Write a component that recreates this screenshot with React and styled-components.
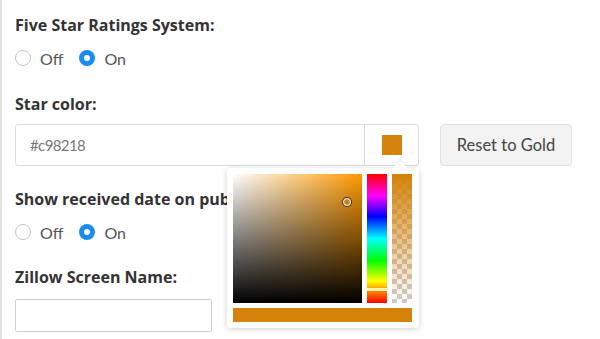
import React from 'react';
import styled, { createGlobalStyle } from 'styled-components';

const Global = createGlobalStyle`
  html, body { margin: 0; padding: 0; background: #fff; }
  body { font-family: Lato, "Liberation Sans", sans-serif; color: #333; }
`;

const Page = styled.div`
  width: 600px;
  height: 339px;
  box-sizing: border-box;
  border-left: 2px solid #e2e2e2;
  padding: 15px 0 0 13px;
  overflow: hidden;
`;

const Field = styled.div`
  margin-bottom: ${p => p.$gap || 24}px;
  position: relative;
`;

const Label = styled.div`
  font-family: "Open Sans", Lato, sans-serif;
  font-weight: 700;
  font-size: 16px;
  line-height: 20px;
  color: #333;
  margin-bottom: ${p => p.$mb || 10}px;
  white-space: nowrap;
`;

const RadioRow = styled.div`
  display: flex;
  align-items: center;
  height: 20px;
  padding-top: 3px;
`;

const Option = styled.label`
  display: flex;
  align-items: center;
  gap: 9px;
  margin-right: 16px;
  font-size: 16px;
  color: #555;
`;

const Dot = styled.span`
  width: 16px;
  height: 16px;
  border-radius: 50%;
  box-sizing: border-box;
  border: ${p => (p.$on ? '5px solid #1a8cf0' : '1.5px solid #c4c4c4')};
  background: #fff;
`;

const InputRow = styled.div`
  display: flex;
  align-items: stretch;
  height: 42px;
  position: relative;
`;

const InputGroup = styled.div`
  display: flex;
  width: 404px;
  border: 1px solid #dcdcdc;
  border-radius: 3px;
  box-sizing: border-box;
`;

const TextBox = styled.div`
  flex: 1;
  display: flex;
  align-items: center;
  padding-left: 14px;
  font-size: 15px;
  letter-spacing: -0.6px;
  color: #777;
`;

const Addon = styled.div`
  width: 53px;
  border-left: 1px solid #dcdcdc;
  display: flex;
  align-items: center;
  justify-content: center;
`;

const Swatch = styled.div`
  width: 20px;
  height: 20px;
  background: ${p => p.$color};
`;

const Button = styled.div`
  margin-left: 21px;
  width: 132px;
  box-sizing: border-box;
  border: 1px solid #e0e0e0;
  border-radius: 4px;
  background: #f3f3f3;
  display: flex;
  align-items: center;
  justify-content: center;
  font-size: 16.5px;
  color: #444;
`;

const Popup = styled.div`
  position: absolute;
  left: 212px;
  top: 44px;
  width: 192px;
  height: 160px;
  box-sizing: border-box;
  background: #fff;
  border-radius: 3px;
  box-shadow: 0 1px 6px rgba(0, 0, 0, 0.18);
  padding: 6px;
  display: grid;
  grid-template-columns: 129px 20px 20px;
  grid-template-rows: 129px 14px;
  column-gap: 5px;
  row-gap: 5px;
  z-index: 2;

  &::before {
    content: '';
    position: absolute;
    top: -6px;
    right: 14px;
    width: 10px;
    height: 10px;
    background: #fff;
    transform: rotate(45deg);
    box-shadow: -1px -1px 1px rgba(0, 0, 0, 0.08);
  }
`;

const SatArea = styled.div`
  position: relative;
  background:
    linear-gradient(to top, #000, rgba(0, 0, 0, 0)),
    linear-gradient(to right, #fff, hsl(36, 100%, 50%));
`;

const SatMarker = styled.span`
  position: absolute;
  left: 110px;
  top: 24px;
  width: 6px;
  height: 6px;
  border-radius: 50%;
  border: 1.5px solid #fff;
  box-shadow: 0 0 0 1px #333;
`;

const HueBar = styled.div`
  position: relative;
  background: linear-gradient(to bottom, #f00 0%, #f0f 17%, #00f 33%, #0ff 50%, #0f0 67%, #ff0 83%, #f00 100%);
`;

const HueMarker = styled.span`
  position: absolute;
  left: 0;
  right: 0;
  top: 114px;
  height: 3px;
  background: #fff3b0;
  box-shadow: 0 0 1px rgba(0, 0, 0, 0.4);
`;

const AlphaBar = styled.div`
  background:
    linear-gradient(to bottom, rgba(212, 130, 10, 1), rgba(212, 130, 10, 0)),
    repeating-conic-gradient(#ccc 0% 25%, #fff 0% 50%) 0 0 / 10px 10px;
`;

const Preview = styled.div`
  grid-column: 1 / 4;
  background: #d4820a;
`;

const Plain = styled.div`
  width: 197px;
  height: 33px;
  box-sizing: border-box;
  border: 1px solid #d0d0d0;
  border-radius: 2px;
`;

const Radios = ({ on }) => (
  <RadioRow>
    <Option><Dot $on={!on} />Off</Option>
    <Option><Dot $on={on} />On</Option>
  </RadioRow>
);

export default function App() {
  return (
    <Page>
      <Global />
      <Field $gap={26}>
        <Label $mb={10}>Five Star Ratings System:</Label>
        <Radios on />
      </Field>
      <Field $gap={23}>
        <Label $mb={10}>Star color:</Label>
        <InputRow>
          <InputGroup>
            <TextBox>#c98218</TextBox>
            <Addon><Swatch $color="#d4820a" /></Addon>
          </InputGroup>
          <Button>Reset to Gold</Button>
          <Popup>
            <SatArea><SatMarker /></SatArea>
            <HueBar><HueMarker /></HueBar>
            <AlphaBar />
            <Preview />
          </Popup>
        </InputRow>
      </Field>
      <Field $gap={25}>
        <Label $mb={10}>Show received date on public page:</Label>
        <Radios on />
      </Field>
      <Field>
        <Label $mb={12}>Zillow Screen Name:</Label>
        <Plain />
      </Field>
    </Page>
  );
}
